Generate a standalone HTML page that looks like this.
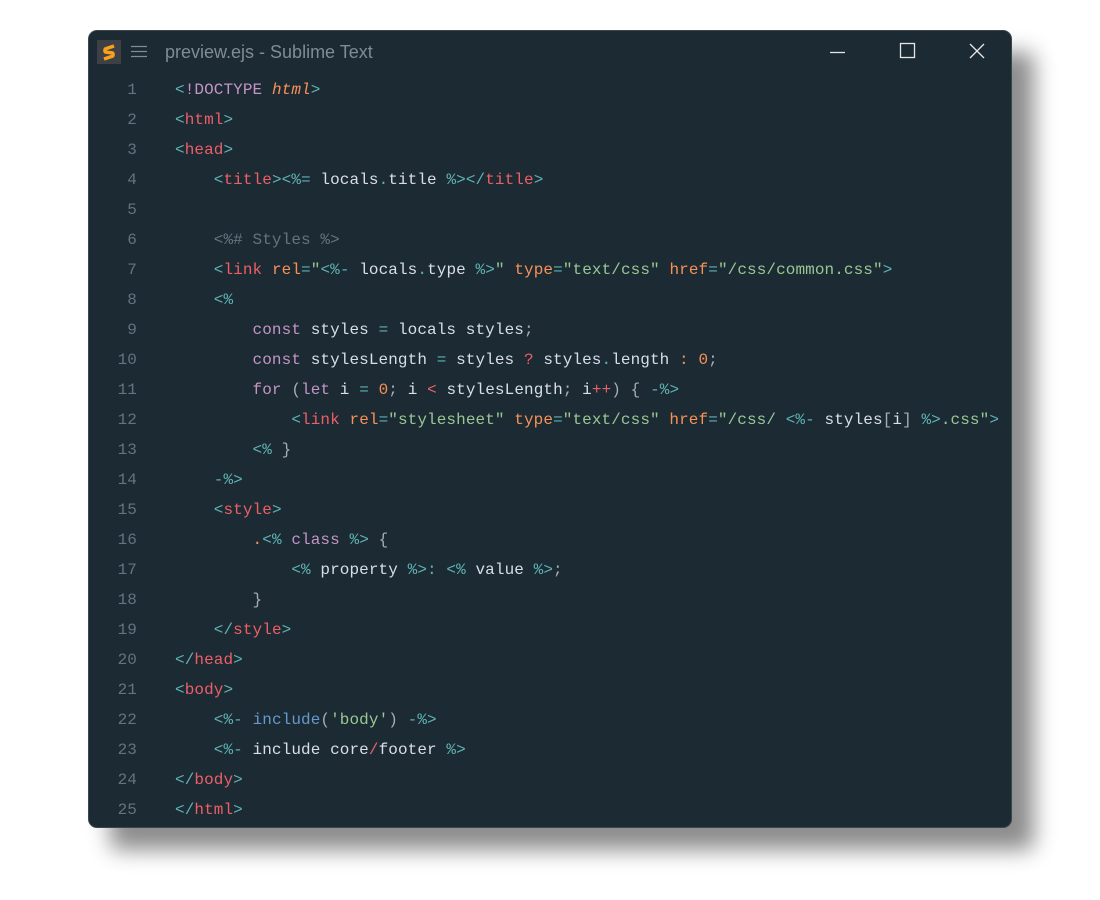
<!DOCTYPE html>
<html><head><style>
body{margin:0;width:1100px;height:900px;background:#fff;position:relative;overflow:hidden;font-family:"Liberation Mono",monospace}
.win{position:absolute;left:88px;top:30px;width:924px;height:798px;background:#1b2a33;border-radius:9px;border:1px solid #3c464d;box-sizing:border-box;box-shadow:22px 22px 22px rgba(0,0,0,0.45)}
.title{position:absolute;left:165px;top:42px;font-family:"Liberation Sans",sans-serif;font-size:18px;color:#7f8c96;letter-spacing:0}
.code{position:absolute;top:75px;left:0;width:1012px}
.l{height:30px;line-height:30px;font-size:16px;white-space:pre;position:relative;color:#d8dee9;letter-spacing:0.09px}
.n{position:absolute;left:100px;width:37px;text-align:right;color:#65737e}
.c{position:absolute;left:175px}
.b{color:#5fb3b3}.t{color:#ec5f67}.a{color:#f99157}.s{color:#99c794}.k{color:#c594c5}.g{color:#65737e}.p{color:#a6acb9}.f{color:#6699cc}
</style></head><body>
<div class="win"></div>
<svg style="position:absolute;left:97px;top:40px" width="24" height="24"><rect width="24" height="24" fill="#3d4044"/><path d="M17 6 L8 9 L8 12 L16 13 L16 16 L7 19" stroke="#f9a11b" stroke-width="3.5" fill="none" stroke-linejoin="bevel"/></svg>
<svg style="position:absolute;left:131px;top:45px" width="18" height="13"><path d="M0 1.5H16M0 6.5H16M0 11.5H16" stroke="#7f8c96" stroke-width="1.3"/></svg>
<div class="title">preview.ejs - Sublime Text</div>
<svg style="position:absolute;left:820px;top:38px" width="170" height="30"><path d="M10 14.5H25" stroke="#e6e6e6" stroke-width="1.3"/><rect x="80.5" y="5.5" width="14" height="14" fill="none" stroke="#e6e6e6" stroke-width="1.3"/><path d="M150 6L164 20M164 6L150 20" stroke="#e6e6e6" stroke-width="1.3"/></svg>
<div class="code">
<div class="l"><span class="n">1</span><span class="c"><span class="b">&lt;</span><span class="k">!DOCTYPE</span> <span class="a"><i>html</i></span><span class="b">&gt;</span></span></div>
<div class="l"><span class="n">2</span><span class="c"><span class="b">&lt;</span><span class="t">html</span><span class="b">&gt;</span></span></div>
<div class="l"><span class="n">3</span><span class="c"><span class="b">&lt;</span><span class="t">head</span><span class="b">&gt;</span></span></div>
<div class="l"><span class="n">4</span><span class="c">    <span class="b">&lt;</span><span class="t">title</span><span class="b">&gt;&lt;%=</span> locals<span class="b">.</span>title <span class="b">%&gt;&lt;/</span><span class="t">title</span><span class="b">&gt;</span></span></div>
<div class="l"><span class="n">5</span><span class="c"></span></div>
<div class="l"><span class="n">6</span><span class="c">    <span class="g">&lt;%# Styles %&gt;</span></span></div>
<div class="l"><span class="n">7</span><span class="c">    <span class="b">&lt;</span><span class="t">link</span> <span class="a">rel</span><span class="b">=</span><span class="s">"</span><span class="b">&lt;%-</span> locals<span class="b">.</span>type <span class="b">%&gt;</span><span class="s">"</span> <span class="a">type</span><span class="b">=</span><span class="s">"text/css"</span> <span class="a">href</span><span class="b">=</span><span class="s">"/css/common.css"</span><span class="b">&gt;</span></span></div>
<div class="l"><span class="n">8</span><span class="c">    <span class="b">&lt;%</span></span></div>
<div class="l"><span class="n">9</span><span class="c">        <span class="k">const</span> styles <span class="b">=</span> locals styles<span class="p">;</span></span></div>
<div class="l"><span class="n">10</span><span class="c">        <span class="k">const</span> stylesLength <span class="b">=</span> styles <span class="t">?</span> styles<span class="b">.</span>length <span class="a">:</span> <span class="a">0</span><span class="p">;</span></span></div>
<div class="l"><span class="n">11</span><span class="c">        <span class="k">for</span> <span class="p">(</span><span class="k">let</span> i <span class="b">=</span> <span class="a">0</span><span class="p">;</span> i <span class="t">&lt;</span> stylesLength<span class="p">;</span> i<span class="t">++</span><span class="p">)</span> <span class="p">{</span> <span class="b">-%&gt;</span></span></div>
<div class="l"><span class="n">12</span><span class="c">            <span class="b">&lt;</span><span class="t">link</span> <span class="a">rel</span><span class="b">=</span><span class="s">"stylesheet"</span> <span class="a">type</span><span class="b">=</span><span class="s">"text/css"</span> <span class="a">href</span><span class="b">=</span><span class="s">"/css/ </span><span class="b">&lt;%-</span> styles<span class="p">[</span>i<span class="p">]</span> <span class="b">%&gt;</span><span class="s">.css"</span><span class="b">&gt;</span></span></div>
<div class="l"><span class="n">13</span><span class="c">        <span class="b">&lt;%</span> <span class="p">}</span></span></div>
<div class="l"><span class="n">14</span><span class="c">    <span class="b">-%&gt;</span></span></div>
<div class="l"><span class="n">15</span><span class="c">    <span class="b">&lt;</span><span class="t">style</span><span class="b">&gt;</span></span></div>
<div class="l"><span class="n">16</span><span class="c">        <span class="a">.</span><span class="b">&lt;%</span> <span class="k">class</span> <span class="b">%&gt;</span> <span class="p">{</span></span></div>
<div class="l"><span class="n">17</span><span class="c">            <span class="b">&lt;%</span> property <span class="b">%&gt;:</span> <span class="b">&lt;%</span> value <span class="b">%&gt;</span><span class="p">;</span></span></div>
<div class="l"><span class="n">18</span><span class="c">        <span class="p">}</span></span></div>
<div class="l"><span class="n">19</span><span class="c">    <span class="b">&lt;/</span><span class="t">style</span><span class="b">&gt;</span></span></div>
<div class="l"><span class="n">20</span><span class="c"><span class="b">&lt;/</span><span class="t">head</span><span class="b">&gt;</span></span></div>
<div class="l"><span class="n">21</span><span class="c"><span class="b">&lt;</span><span class="t">body</span><span class="b">&gt;</span></span></div>
<div class="l"><span class="n">22</span><span class="c">    <span class="b">&lt;%-</span> <span class="f">include</span><span class="p">(</span><span class="s">'body'</span><span class="p">)</span> <span class="b">-%&gt;</span></span></div>
<div class="l"><span class="n">23</span><span class="c">    <span class="b">&lt;%-</span> include core<span class="t">/</span>footer <span class="b">%&gt;</span></span></div>
<div class="l"><span class="n">24</span><span class="c"><span class="b">&lt;/</span><span class="t">body</span><span class="b">&gt;</span></span></div>
<div class="l"><span class="n">25</span><span class="c"><span class="b">&lt;/</span><span class="t">html</span><span class="b">&gt;</span></span></div>
</div>
</body></html>
